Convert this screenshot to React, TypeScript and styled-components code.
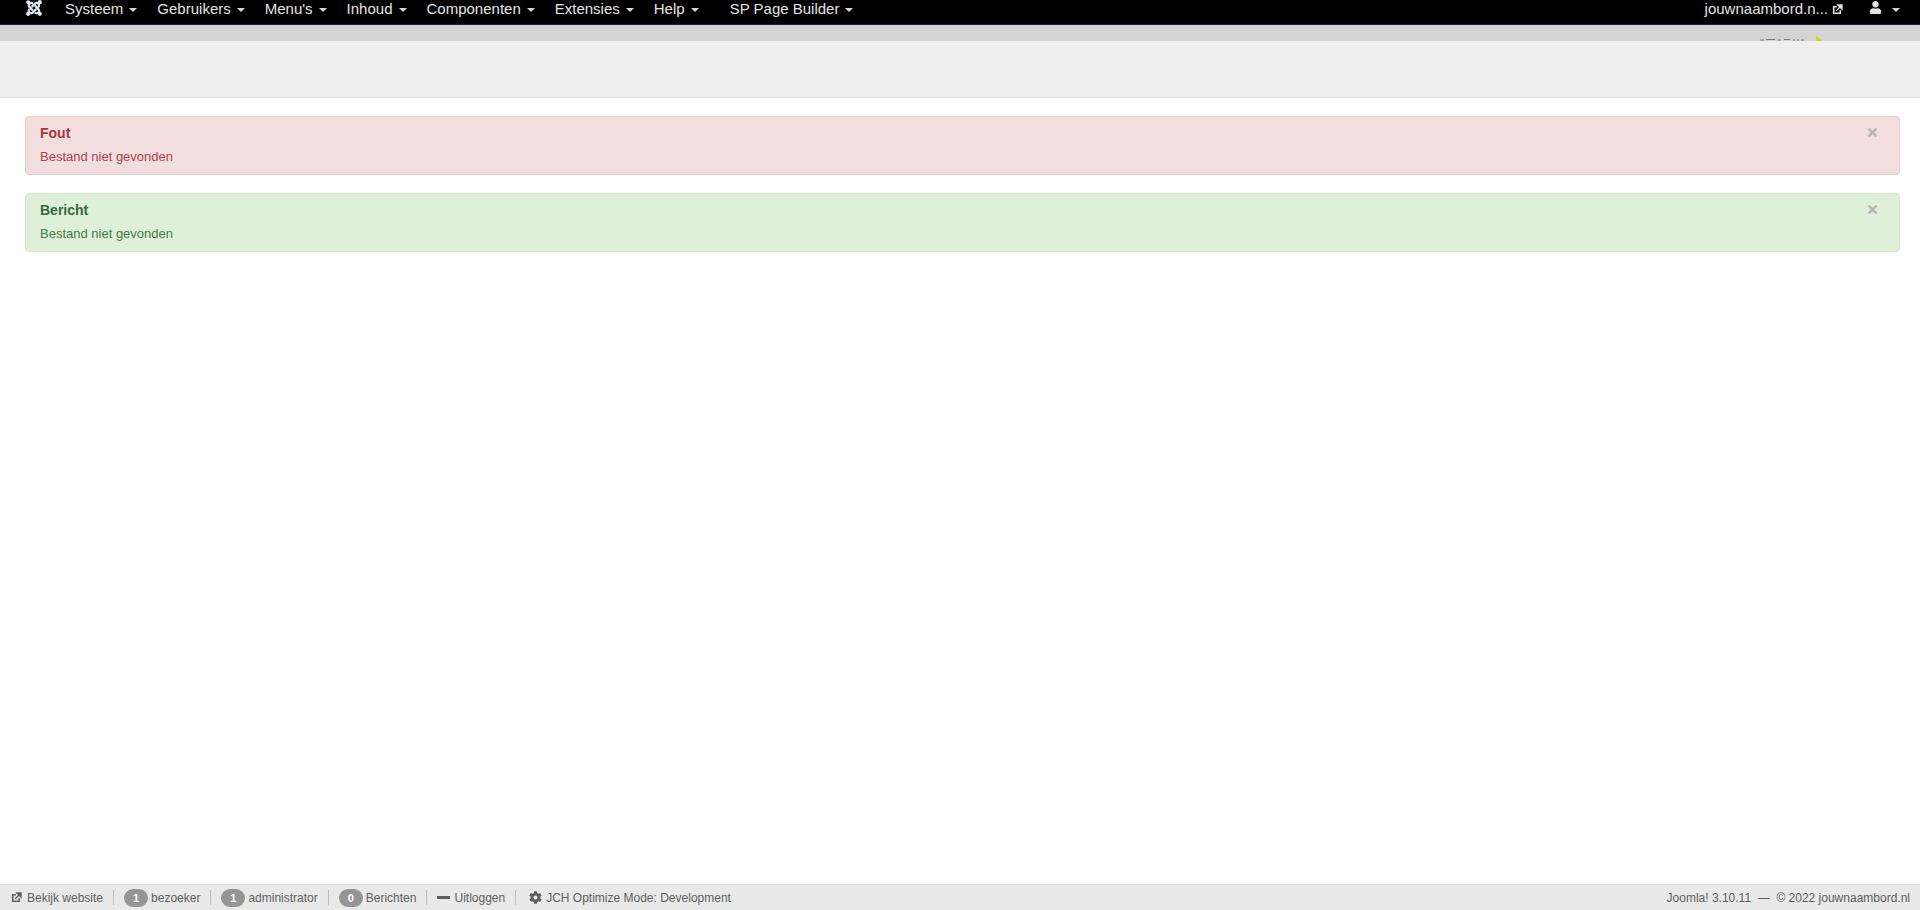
import React from "react";
import styled, { createGlobalStyle } from "styled-components";
import { FaJoomla, FaUser, FaTimes, FaCog } from "react-icons/fa";

const Global = createGlobalStyle`
  html, body { margin: 0; padding: 0; background: #fff; }
  body { font-family: "Liberation Sans", Arial, sans-serif; font-size: 13px; }
  #root { height: 910px; }
`;

const Page = styled.div`
  height: 910px;
  display: flex;
  flex-direction: column;
  overflow: hidden;
`;

const TopNav = styled.nav`
  height: 24px;
  flex: none;
  background: #000;
  border-bottom: 1px solid #1c2033;
  display: flex;
  align-items: flex-start;
  justify-content: space-between;
`;

const NavGroup = styled.div`
  display: flex;
  align-items: center;
  height: 24px;
`;

const Brand = styled.a`
  width: 55px;
  height: 24px;
  display: flex;
  justify-content: center;
  align-items: flex-start;
  padding: 0 0 0 12px;
  box-sizing: border-box;
  color: #e6e9f2;
  font-size: 18px;
  line-height: 0;
  svg { margin-top: -1px; }
`;

const NavItem = styled.a<{ $extra?: number }>`
  display: flex;
  align-items: center;
  height: 18px;
  padding: 0 10px;
  margin-left: ${(p) => p.$extra ?? 0}px;
  margin-top: -6px;
  color: #e4e4e4;
  font-size: 15px;
  line-height: 18px;
  white-space: nowrap;
`;

const Caret = styled.span<{ $gap?: number }>`
  display: inline-block;
  width: 0;
  height: 0;
  margin-left: ${(p) => p.$gap ?? 6}px;
  margin-top: 2px;
  border-left: 4px solid transparent;
  border-right: 4px solid transparent;
  border-top: 4px solid #d8d8d8;
`;

const SiteLink = styled(NavItem)`
  padding: 0;
`;

const UserItem = styled(NavItem)`
  padding: 0 20px 0 0;
  margin-left: 26px;
  svg { font-size: 13px; margin-top: -3px; }
`;

const NewTabIcon = styled.svg<{ $gap?: number }>`
  width: 11px;
  height: 11px;
  margin-left: ${(p) => p.$gap ?? 4}px;
  flex: none;
`;

const SubHead = styled.div`
  height: 16px;
  flex: none;
  background: #d4d4d4;
  position: relative;
  overflow: hidden;
`;

const LogoSliver = styled.svg`
  position: absolute;
  right: 94px;
  top: 10px;
  width: 66px;
  height: 6px;
`;

const Toolbar = styled.div`
  height: 56px;
  flex: none;
  background: #efefef;
  border-bottom: 1px solid #dcdcdc;
`;

const Main = styled.main`
  flex: 1;
  padding: 18px 20px 0 25px;
  display: flex;
  flex-direction: column;
  gap: 18px;
`;

const Alert = styled.div<{ $kind: "error" | "success" }>`
  position: relative;
  height: 59px;
  box-sizing: border-box;
  padding: 7px 14px;
  border-radius: 4px;
  border: 1px solid ${(p) => (p.$kind === "error" ? "#ebccd1" : "#d6e9c6")};
  background: ${(p) => (p.$kind === "error" ? "#f2dede" : "#dff0d8")};
  color: ${(p) => (p.$kind === "error" ? "#b0434c" : "#46794b")};
  h4 {
    margin: 0;
    font-size: 14px;
    line-height: 18px;
    font-weight: 700;
    color: ${(p) => (p.$kind === "error" ? "#a63540" : "#2f6c3b")};
  }
  p {
    margin: 6px 0 0;
    line-height: 18px;
    font-size: 13px;
  }
`;

const Close = styled.span`
  position: absolute;
  right: 20px;
  top: 9px;
  color: #b5b5b5;
  font-size: 13px;
  line-height: 0;
`;

const StatusBar = styled.footer`
  height: 26px;
  flex: none;
  box-sizing: border-box;
  background: #e9e9e9;
  border-top: 1px solid #dcdcdc;
  display: flex;
  align-items: center;
  justify-content: space-between;
  color: #5e5e5e;
  font-size: 12px;
  padding: 0 10px 0 11px;
`;

const StatusGroup = styled.div`
  display: flex;
  align-items: center;
`;

const StatusItem = styled.span<{ $first?: boolean }>`
  display: flex;
  align-items: center;
  height: 15px;
  white-space: nowrap;
  padding: 0 10px;
  border-left: ${(p) => (p.$first ? "0" : "1px solid #bdbdbd")};
  ${(p) => (p.$first ? "padding-left: 0;" : "")}
`;

const IconLabel = styled.span`
  margin-left: 5px;
`;

const Badge = styled.span`
  display: inline-block;
  width: 24px;
  height: 18px;
  line-height: 18px;
  border-radius: 9px;
  background: #959595;
  color: #fff;
  font-weight: 700;
  font-size: 11px;
  text-align: center;
  margin-right: 3px;
`;

const Minus = styled.span`
  display: inline-block;
  width: 13px;
  height: 3px;
  background: #5e5e5e;
  margin-right: 4px;
`;

const Gear = styled(FaCog)`
  font-size: 13px;
  margin: 0 4px 0 3px;
`;

const menu = ["Systeem", "Gebruikers", "Menu's", "Inhoud", "Componenten", "Extensies", "Help"];

const NewTab = ({ color, gap }: { color: string; gap?: number }) => (
  <NewTabIcon viewBox="0 0 16 16" fill="none" $gap={gap}>
    <path d="M12 9v4.5H2.5V4H7" stroke={color} strokeWidth="2.4" />
    <path d="M6 10l6-6M8.5 1.5h6v6z" stroke={color} strokeWidth="2" fill={color} />
  </NewTabIcon>
);

export default function App() {
  return (
    <Page>
      <Global />
      <TopNav>
        <NavGroup>
          <Brand><FaJoomla /></Brand>
          {menu.map((m) => (
            <NavItem key={m}>{m}<Caret /></NavItem>
          ))}
          <NavItem $extra={11}>SP Page Builder<Caret /></NavItem>
        </NavGroup>
        <NavGroup>
          <SiteLink>jouwnaambord.n...<NewTab color="#e4e4e4" /></SiteLink>
          <UserItem><FaUser /><Caret $gap={10} /></UserItem>
        </NavGroup>
      </TopNav>
      <SubHead>
        <LogoSliver viewBox="0 0 66 6">
          <path d="M0 5h4M6 4.5h9M18 5h3M24 4.5h6M33 5h2M37 5h2M41 5h3" stroke="#777" strokeWidth="1" />
          <path d="M56 1l7 5h-7z" fill="#c9dc0a" />
        </LogoSliver>
      </SubHead>
      <Toolbar />
      <Main>
        <Alert $kind="error">
          <Close><FaTimes /></Close>
          <h4>Fout</h4>
          <p>Bestand niet gevonden</p>
        </Alert>
        <Alert $kind="success">
          <Close><FaTimes /></Close>
          <h4>Bericht</h4>
          <p>Bestand niet gevonden</p>
        </Alert>
      </Main>
      <StatusBar>
        <StatusGroup>
          <StatusItem $first><NewTab color="#5e5e5e" gap={0} /><IconLabel>Bekijk website</IconLabel></StatusItem>
          <StatusItem><Badge>1</Badge>bezoeker</StatusItem>
          <StatusItem><Badge>1</Badge>administrator</StatusItem>
          <StatusItem><Badge>0</Badge>Berichten</StatusItem>
          <StatusItem><Minus />Uitloggen</StatusItem>
          <StatusItem><Gear />JCH Optimize Mode: Development</StatusItem>
        </StatusGroup>
        <StatusGroup>Joomla! 3.10.11 &nbsp;—&nbsp; © 2022 jouwnaambord.nl</StatusGroup>
      </StatusBar>
    </Page>
  );
}
